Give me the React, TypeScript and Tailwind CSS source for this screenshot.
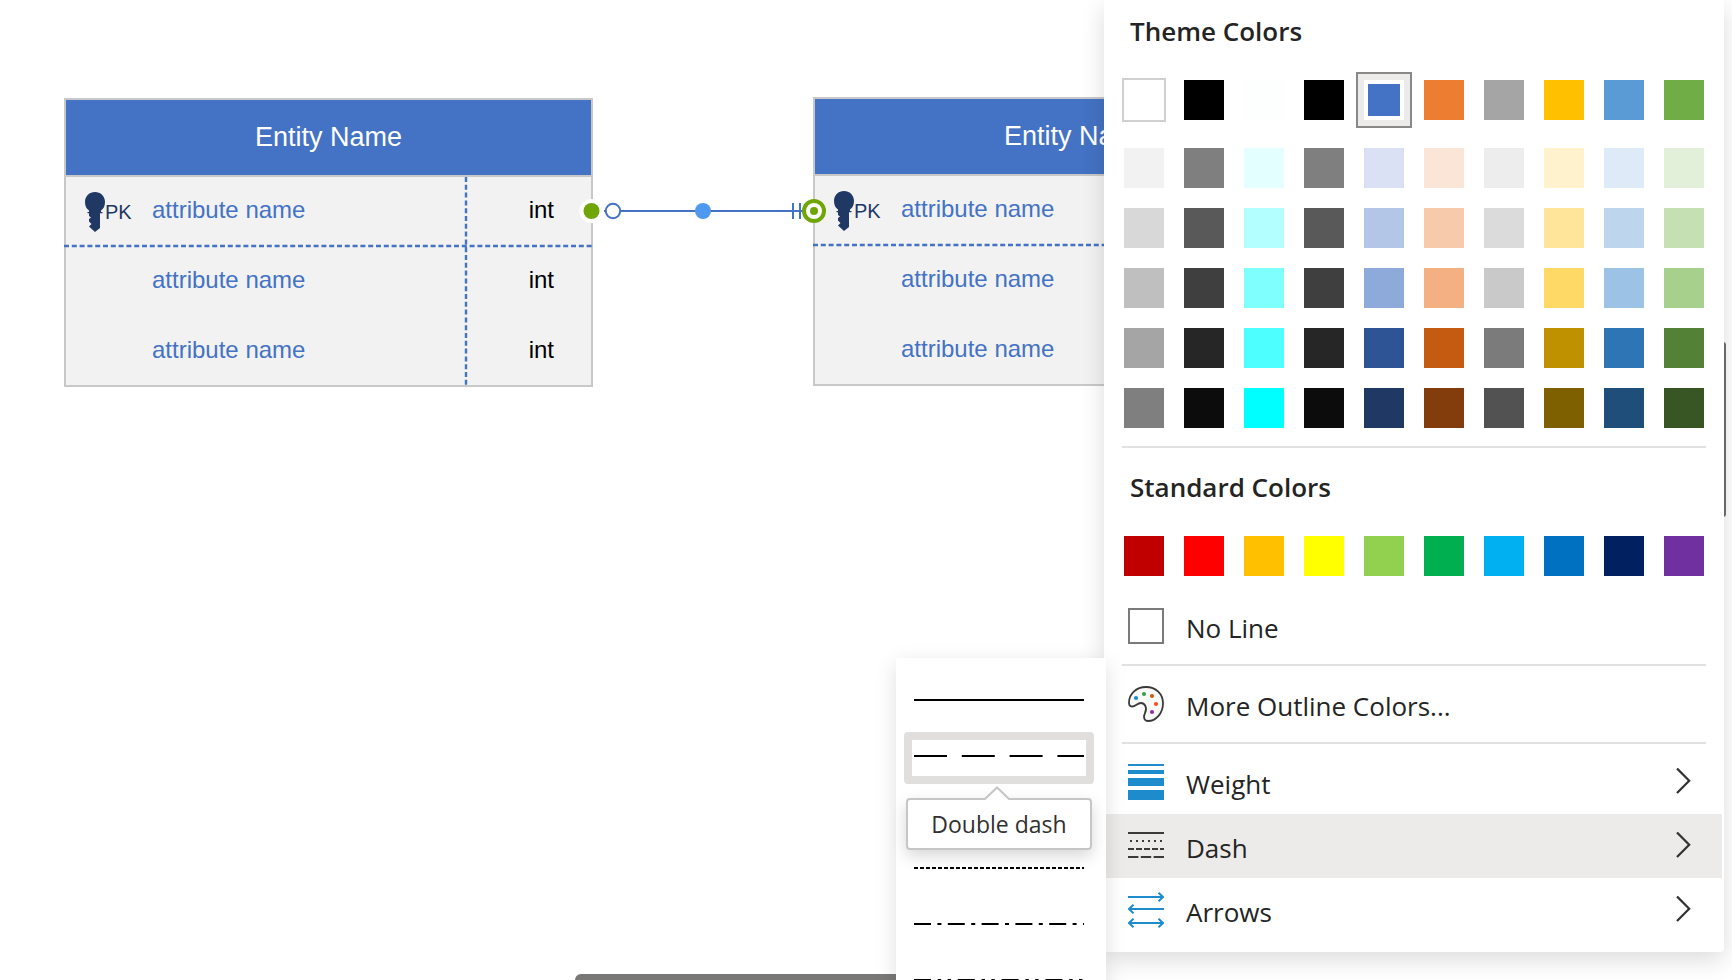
import type { ReactNode } from 'react'

const themeRow = [
  'bg-white ring-2 ring-[#d2d0ce]',
  'bg-black',
  'bg-[#fdffff]',
  'bg-black',
  'bg-[#4472c4]',
  'bg-[#ed7d31]',
  'bg-[#a5a5a5]',
  'bg-[#ffc000]',
  'bg-[#5b9bd5]',
  'bg-[#70ad47]',
]

const tints = [
  ['bg-[#f2f2f2]', 'bg-[#7f7f7f]', 'bg-[#e3ffff]', 'bg-[#7f7f7f]', 'bg-[#dae1f4]', 'bg-[#fbe5d6]', 'bg-[#ededed]', 'bg-[#fff2cc]', 'bg-[#deeaf8]', 'bg-[#e2efd9]'],
  ['bg-[#d8d8d8]', 'bg-[#595959]', 'bg-[#b3ffff]', 'bg-[#595959]', 'bg-[#b4c6e7]', 'bg-[#f7caac]', 'bg-[#dbdbdb]', 'bg-[#fee599]', 'bg-[#bdd6ee]', 'bg-[#c5e0b3]'],
  ['bg-[#bfbfbf]', 'bg-[#3f3f3f]', 'bg-[#80ffff]', 'bg-[#3f3f3f]', 'bg-[#8eaadb]', 'bg-[#f4b083]', 'bg-[#c9c9c9]', 'bg-[#ffd965]', 'bg-[#9cc2e5]', 'bg-[#a8d08d]'],
  ['bg-[#a5a5a5]', 'bg-[#262626]', 'bg-[#4dffff]', 'bg-[#262626]', 'bg-[#2f5496]', 'bg-[#c55a11]', 'bg-[#7b7b7b]', 'bg-[#bf9000]', 'bg-[#2e75b5]', 'bg-[#538135]'],
  ['bg-[#7f7f7f]', 'bg-[#0c0c0c]', 'bg-[#00ffff]', 'bg-[#0c0c0c]', 'bg-[#1f3864]', 'bg-[#833c0b]', 'bg-[#525252]', 'bg-[#7f6000]', 'bg-[#1e4e79]', 'bg-[#375623]'],
]

const standardRow = [
  'bg-[#c00000]',
  'bg-[#ff0000]',
  'bg-[#ffc000]',
  'bg-[#ffff00]',
  'bg-[#92d050]',
  'bg-[#00b050]',
  'bg-[#00b0f0]',
  'bg-[#0070c0]',
  'bg-[#002060]',
  'bg-[#7030a0]',
]

const dashes = [
  { name: 'Solid', pattern: undefined },
  { name: 'Double dash', pattern: '33 14.8' },
  { name: 'Long dash', pattern: '24 8' },
  { name: 'Square dot', pattern: '4 2' },
  { name: 'Dash dot', pattern: '17 6.4 4 6.4' },
  { name: 'Dash dot dot', pattern: '17 6.8 3.4 6.4 3.4 6.8' },
]

const SELECTED = 4

function SwatchRow({ label, colors, selected }: { label: string; colors: string[]; selected?: number }) {
  return (
    <div className="grid h-10 grid-cols-[repeat(10,40px)] justify-between">
      {colors.map((color, i) =>
        i === selected ? (
          <button
            key={i}
            aria-label={`${label} ${i + 1}`}
            aria-pressed="true"
            className="-m-2 size-14 border-2 border-[#8a8886] bg-[#edebe9] p-1.5"
          >
            <span className="block size-10 bg-white p-1">
              <span className={`block size-8 ${color}`} />
            </span>
          </button>
        ) : (
          <button key={i} aria-label={`${label} ${i + 1}`} className={`size-10 ${color}`} />
        )
      )}
    </div>
  )
}

function Divider() {
  return <hr className="mx-4 my-1.5 border-t-2 border-[#e1e1e1]" />
}

function MenuRow({ icon, label, submenu, active }: { icon: ReactNode; label: string; submenu?: boolean; active?: boolean }) {
  return (
    <button
      aria-haspopup={submenu ? 'menu' : undefined}
      className={`flex h-16 w-full items-center gap-[22px] pr-[30px] pl-[22px] text-left ${active ? 'bg-[#edebe9]' : ''}`}
    >
      {icon}
      <span className="flex-1 pt-1">{label}</span>
      {submenu && (
        <svg className="h-7 w-4" viewBox="0 0 16 28" fill="none" stroke="#323130" strokeWidth="2.2" aria-hidden="true">
          <path d="M1 0.500L13.200 12.700L1 25" />
        </svg>
      )}
    </button>
  )
}

function PaletteIcon() {
  return (
    <svg className="size-9" viewBox="0 0 36 36" aria-hidden="true">
      <path
        d="M18 1C28 1 35 8 35 17.5C35 27 28 35 20 35C16 35 15 31 17 27C19.5 22 17 17 13 17C9 17 8 20.5 4 20.5C1.5 20.5 1 18.5 1 16.5C1 8 8 1 18 1Z"
        fill="#fafafa"
        stroke="#3a3a3a"
        strokeWidth="1.8"
      />
      <circle cx="8" cy="12" r="2.1" fill="#1e8bcd" />
      <circle cx="16" cy="8" r="2.1" fill="#3a9f4b" />
      <circle cx="24" cy="10" r="2.1" fill="#d05c12" />
      <circle cx="28" cy="18" r="2.1" fill="#f4511e" />
      <circle cx="24" cy="26" r="2.1" fill="#9130a5" />
    </svg>
  )
}

function WeightIcon() {
  return (
    <svg className="size-9" viewBox="0 0 36 36" fill="#1e8bcd" aria-hidden="true">
      <path d="M0 0h36v2H0zM0 6h36v4H0zM0 14h36v8H0zM0 26h36v10H0z" />
    </svg>
  )
}

function DashIcon() {
  return (
    <svg className="size-9" viewBox="0 0 36 36" stroke="#3a3a3a" strokeWidth="2" aria-hidden="true">
      <path d="M0 5h36" />
      <path d="M2 13h34" strokeDasharray="2 4" />
      <path d="M0 21h36" strokeDasharray="6 2" />
      <path d="M0 29h36" strokeDasharray="10.4 2.4" />
    </svg>
  )
}

function ArrowsIcon() {
  return (
    <svg className="size-9" viewBox="0 0 36 36" fill="none" stroke="#1e8bcd" strokeWidth="2" aria-hidden="true">
      <path d="M0 5h35M30.5 0.8L35 5l-4.5 4.2" />
      <path d="M36 17H1M5.5 12.8L1 17l4.5 4.2" />
      <path d="M1 31h34M5.5 26.8L1 31l4.5 4.2M30.5 26.8L35 31l-4.5 4.2" />
    </svg>
  )
}

function KeyIcon() {
  return (
    <svg className="h-10 w-5 shrink-0" viewBox="0 0 20 40" fill="#1f3864" aria-hidden="true">
      <path d="M10 0C15.5 0 20 4 20 10C20 14 18.500 17 16 18.500V20H17.500V21.200H15V36L10 40L4 34.500L6.500 32L4 29.500V27L6 25.500L4 24V21.200H2.500V20H4V18.500C1.500 17 0 14 0 10C0 4 4.500 0 10 0Z" />
    </svg>
  )
}

function Entity() {
  return (
    <div className="relative w-[529px]">
      <table className="w-full table-fixed border-collapse bg-[#f2f2f2] text-2xl outline-2 -outline-offset-2 outline-[#c8c8c8]">
        <caption className="h-[79px] border-2 border-[#c8c8c8] bg-[#4472c4] text-[27px] leading-[75px] text-white">Entity Name</caption>
        <tbody>
          {[true, false, false].map((pk, i) => (
            <tr key={i} className="h-[70px]">
              <td className="w-[88px] p-0 pl-[21px]">
                {pk && (
                  <span className="flex items-center text-xl text-[#1f3864]">
                    <KeyIcon />
                    PK
                  </span>
                )}
              </td>
              <td className="p-0 pb-1 text-[#4472c4]">attribute name</td>
              <td className="w-[128px] p-0 pr-[39px] pb-1 text-right text-black">int</td>
            </tr>
          ))}
        </tbody>
      </table>
      <svg className="absolute inset-0 size-full" stroke="#4472c4" strokeWidth="2.400" strokeDasharray="5 2.8" aria-hidden="true">
        <path d="M0 148h529M402 79v210" />
      </svg>
    </div>
  )
}

function Connector() {
  return (
    <svg className="absolute top-[197px] left-[578px] h-7 w-[254px]" viewBox="0 0 254 28" aria-hidden="true">
      <path d="M26 14h4M42 14h185M215 6v16M222 6v16" stroke="#4472c4" strokeWidth="2" />
      <circle cx="13.5" cy="14" r="12" fill="#fff" />
      <circle cx="13.5" cy="14" r="8" fill="#6fa606" />
      <circle cx="35" cy="14" r="7.2" fill="#fff" stroke="#4472c4" strokeWidth="2" />
      <circle cx="125" cy="14" r="8" fill="#5099f0" />
      <circle cx="236" cy="14" r="10" fill="#fff" stroke="#6fa606" strokeWidth="4" />
      <circle cx="236" cy="14" r="4" fill="#6fa606" />
    </svg>
  )
}

function DashMenu() {
  return (
    <div role="menu" aria-label="Dash" className="absolute top-[658px] right-full -mr-0.5 w-[210px] bg-white pt-[18px] pr-3 pb-4 pl-2 shadow-[0_6px_20px_rgba(0,0,0,0.13)]">
      <div className="flex flex-col gap-1">
        {dashes.map(({ name, pattern }, i) => (
          <button
            key={name}
            role="menuitem"
            aria-label={name}
            className={`rounded border-8 ${i === 1 ? 'border-[#e1dfdd]' : 'border-transparent'}`}
          >
            <svg className="block h-9 w-full" viewBox="0 0 174 36" aria-hidden="true">
              <path d="M2 16h170" stroke="#000" strokeWidth="2" strokeDasharray={pattern} />
            </svg>
          </button>
        ))}
      </div>
      <div role="tooltip" className="absolute top-[140px] left-2.5 flex h-[52px] w-[186px] items-center justify-center rounded border-2 border-[#c8c6c4] bg-white text-[23px] text-[#323130] shadow-[0_6px_16px_rgba(0,0,0,0.16)]">
        <svg className="absolute -top-3.5 left-1/2 -ml-[15px] h-3.5 w-[26px]" viewBox="0 0 26 14" aria-hidden="true">
          <path d="M0 14L13 1.5L26 14" fill="#fff" stroke="#c8c6c4" strokeWidth="2" />
        </svg>
        Double dash
      </div>
    </div>
  )
}

function OutlineMenu() {
  return (
    <div className="absolute top-0 right-2 w-[620px] font-['Open_Sans','Noto_Sans',sans-serif] text-[26px] leading-9 text-[#242424]">
      <div className="rounded-b bg-white px-0.5 pb-2.5 shadow-[0_8px_24px_rgba(0,0,0,0.14)]">
        <h2 className="mb-[18px] flex h-[62px] items-center pl-6 font-semibold">Theme Colors</h2>
        <div className="px-[18px]">
          <SwatchRow label="Theme color" colors={themeRow} selected={SELECTED} />
          <div className="mt-7 mb-[18px] flex flex-col gap-5">
            {tints.map((row, i) => (
              <SwatchRow key={i} label={`Theme shade ${i + 1}, color`} colors={row} />
            ))}
          </div>
        </div>
        <hr className="mx-4 border-t-2 border-[#e1e1e1]" />
        <h2 className="mb-2.5 flex h-[78px] items-center pl-6 font-semibold">Standard Colors</h2>
        <div className="mb-[18px] px-[18px]">
          <SwatchRow label="Standard color" colors={standardRow} />
        </div>
        <MenuRow icon={<span className="size-9 border-2 border-[#7a7a7a] bg-white" />} label="No Line" />
        <Divider />
        <MenuRow icon={<PaletteIcon />} label="More Outline Colors..." />
        <Divider />
        <MenuRow icon={<WeightIcon />} label="Weight" submenu />
        <MenuRow icon={<DashIcon />} label="Dash" submenu active />
        <MenuRow icon={<ArrowsIcon />} label="Arrows" submenu />
      </div>
      <DashMenu />
    </div>
  )
}

export default function App() {
  return (
    <main className="relative h-screen overflow-hidden bg-white font-['Liberation_Sans',Arial,sans-serif]">
      {/* Diagram canvas */}
      <div className="absolute top-[98px] left-[64px]">
        <Entity />
      </div>
      <div className="absolute top-[97px] left-[813px]">
        <Entity />
      </div>
      <Connector />

      {/* Canvas scrollbars */}
      <div className="absolute bottom-0 left-[575px] h-1.5 w-[420px] rounded-t-md bg-[#7a7876]" />
      <div className="absolute top-[342px] right-1.5 h-[175px] w-1.5 rounded-full bg-[#6e6e6e]" />

      <OutlineMenu />
    </main>
  )
}
